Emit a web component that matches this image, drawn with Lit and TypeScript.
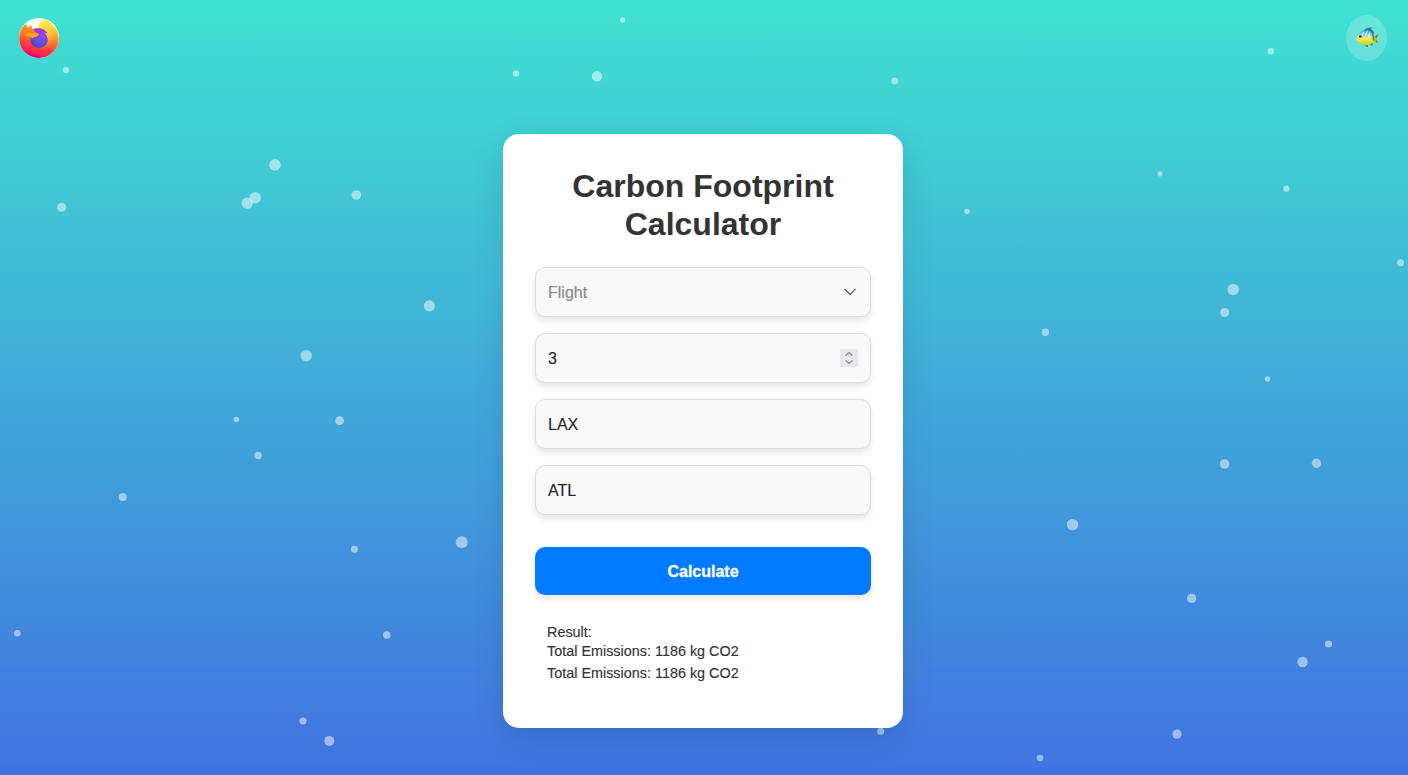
import { LitElement, html, css, svg } from "lit";
import { customElement, state } from "lit/decorators.js";

// [centre x, centre y, diameter]
const BUBBLES: [number, number, number][] = [
  [66, 70, 6.4], [61.7, 207.2, 9], [275, 164.8, 11.6], [255.2, 197.7, 11.6], [247.2, 203.2, 11.2],
  [356.3, 195, 9.6], [429.4, 305.8, 11.2], [306.2, 355.8, 11.4], [236.4, 419.4, 5.4],
  [339.6, 420.6, 8.8], [258.1, 455.4, 7.4], [122.8, 497, 8], [354.4, 549.3, 7], [461.7, 542.2, 12],
  [17.3, 633.3, 6.6], [386.8, 635, 7.6], [303, 721, 7], [329.3, 740.9, 10],
  [622.6, 20, 5.4], [516, 73.5, 6.4], [597, 76.2, 10.4], [894.8, 81, 6.8],
  [1270.8, 51.3, 6.6], [1160, 173.8, 5.2], [1286.4, 188.7, 6.2], [967, 211.5, 5.6],
  [1400.5, 262.7, 7], [1233.2, 289.5, 11.4], [1224.7, 312.5, 9], [1045.3, 332.3, 7.4],
  [1267.5, 379, 5.6], [1224.6, 464, 9.6], [1316.5, 463.2, 9.4], [1072.5, 524.6, 11.4],
  [1191.6, 598.4, 9.4], [1328.5, 644, 7.2], [1302.6, 662, 10.4], [1177, 734.2, 9.2],
  [1040, 758, 6.6], [880.7, 731.3, 7],
];

const firefox = svg`
  <defs>
    <linearGradient id="body" x1=".75" y1=".05" x2=".42" y2="1">
      <stop offset="0" stop-color="#fff04c"/><stop offset=".25" stop-color="#ffb52f"/>
      <stop offset=".48" stop-color="#ff7a2c"/><stop offset=".72" stop-color="#ff4040"/>
      <stop offset=".88" stop-color="#fb2050"/><stop offset="1" stop-color="#cf0070"/>
    </linearGradient>
    <linearGradient id="flame" x1=".3" y1="0" x2=".6" y2="1">
      <stop offset="0" stop-color="#fff14f"/><stop offset=".5" stop-color="#ffc83a"/>
      <stop offset="1" stop-color="#ff8a2b" stop-opacity="0"/>
    </linearGradient>
    <radialGradient id="globe" cx=".65" cy=".35" r=".7">
      <stop offset="0" stop-color="#8a4df5"/><stop offset=".5" stop-color="#6f4fe2"/>
      <stop offset="1" stop-color="#4a41b4"/>
    </radialGradient>
    <linearGradient id="head" x1=".3" y1="0" x2=".3" y2="1">
      <stop offset="0" stop-color="#ff9a12"/><stop offset=".5" stop-color="#ff7a22"/>
      <stop offset="1" stop-color="#ff4a3c" stop-opacity="0"/>
    </linearGradient>
  </defs>
  <circle cx="20" cy="20" r="20" fill="#fff"/>
  <path d="M3.200 9.800C4.400 8.300 5.800 7.200 7.400 6l.9 4.300 4-3.100.6 4.100c2.200-1 4.700-1.100 6.900-.5C19.600 7.600 21 3.500 24.200 1.300 30.500 3 39.800 9.300 39.800 20.800c0 10.800-8.900 19.100-19.800 19.100S.2 31.500.2 20.600c0-4 1-7.900 3-10.800z" fill="url(#body)"/>
  <path d="M24.200 1.300C20.800 4 19.600 7.500 20 10.800c5.400 1 8.300 5 8.300 10 0 6-4.300 9.300-8 9.600 9.500 1.700 16-4.600 16-13.200 0-7.500-5.300-14.300-12.100-15.900z" fill="url(#flame)"/>
  <circle cx="20" cy="20.700" r="9.200" fill="url(#globe)"/>
  <path d="M13.500 11.600c4-2.400 12.600-2 14.800 4l-3-.8c1.500 1.200 2.700 3 2.700 5-1-2.700-4.500-4.200-9.500-4.700z" fill="#a137de"/>
  <path d="M25 14.500c1.700.2 3 1.200 3.800 2.400.9 2.200 1 4.300.3 6.600-.2-3.800-1.500-6.800-4.100-9z" fill="#ffc13a"/>
  <path d="M7.400 6l.9 4.300 4-3.100.6 4.300c1.600.4 3 1.500 3.900 3.100 1.800.2 3.200.8 3.100 1.900-.2 1.700-3.800 2.100-5.900 3.300-1.800 1-2 3.600-1.500 5.200L4 25 3.200 9.800C4.400 8.300 5.800 7.200 7.400 6z" fill="url(#head)"/>
  <path d="M5.800 16.300c3.200-.9 7.500-1.500 12.800-.6.700.3 1.400.5 1.300 1-.3 1.600-4.700 1.800-6.300 3.600-1.800-1.800-5.700-1.400-7.800-4z" fill="#ffa81b"/>`;

const fish = svg`
  <defs>
    <linearGradient id="scales" x1=".42" y1="0" x2=".45" y2="1">
      <stop offset="0" stop-color="#1a98d4"/><stop offset=".35" stop-color="#7fd4e4"/>
      <stop offset=".55" stop-color="#f0ee50"/><stop offset="1" stop-color="#d2cd1e"/>
    </linearGradient>
  </defs>
  <path d="M9 3.400C10.500 1.200 13.500.2 18 .6c-1.500.3-2.400.8-2.500 1.500 2 1 3.300 2.700 3.800 4.600z" fill="#2a6f8c"/>
  <path d="M9.500 17.500c.5 1.200 1.800 2.200 3.600 2.600l-.6-2.400zM14 16.500l3.300 2.200.2-3z" fill="#656321"/>
  <path d="M18 10.200c2 .2 3.300-1.700 4.800-3.200.3 2-1 3.500-1 4.800 0 1.600 1.300 3 1.100 4.500-1.800-.8-3-2.800-5-2.900z" fill="#c3b41a"/>
  <path d="M20 9.900l2.800-2.900-.9 3.600zM20.500 14l2.400 2.300-1-3z" fill="#6d6a22"/>
  <path d="M.5 12.200C3 8.500 6 3 11.500 2.800c4 .2 7.500 3.600 7.500 8.400 0 4-2.700 7-7.500 7C7.500 18.200 5 15.400 2 14z" fill="url(#scales)"/>
  <path d="M16 4c2.300 1.700 3.500 4.500 2.900 8.500l-.9 2c-.6-3.200.2-6.800-2-10.500z" fill="#3f675b"/>
  <path d="M9 4.800C7.900 6 7.500 7.300 7.600 8.600M12.300 4c-1.200 1.900-1.600 3.500-1.200 5.600M15 5.600c-1.300 1.800-1.400 3.200-.9 4.800" fill="none" stroke="#e4f8fa" stroke-width="1.200"/>
  <circle cx="5.300" cy="9.500" r="1.900" fill="#f0ee9c"/>
  <circle cx="5.300" cy="9.500" r="1.250" fill="#1c1d16"/>`;

@customElement("app-root")
export class AppRoot extends LitElement {
  static styles = css`
    :host {
      display: block;
      font-family: "Liberation Sans", Arial, sans-serif;
    }
    .page {
      position: relative;
      box-sizing: border-box;
      width: 100%;
      height: 775px;
      overflow: hidden;
      background: linear-gradient(#40e2d1, #4169e1 840px);
      display: flex;
      flex-direction: column;
    }
    .bubbles {
      position: absolute;
      inset: 0;
      width: 100%;
      height: 100%;
      fill: rgba(255, 255, 255, 0.5);
    }
    .top {
      display: flex;
      justify-content: space-between;
      align-items: center;
      height: 46px;
      padding: 15px 21px 0 19.300px;
      position: relative;
    }
    .logo { width: 40px; height: 40px; display: block; }
    .fish {
      width: 41px;
      height: 46px;
      border: 0;
      padding: 0 0 2px;
      border-radius: 50%;
      background: rgba(255, 255, 255, 0.2);
      display: flex;
      align-items: center;
      justify-content: center;
    }
    .fish svg { width: 23px; height: 21px; display: block; }
    .card {
      position: relative;
      box-sizing: border-box;
      width: 400px;
      height: 594px;
      margin: 73px auto 0;
      left: -1px;
      padding: 33px 32px 32px;
      border-radius: 16px;
      background: #fff;
      box-shadow: 0 8px 32px rgba(0, 0, 0, 0.1);
      display: flex;
      flex-direction: column;
    }
    h1 {
      margin: 0 0 23px;
      font-size: 32px;
      line-height: 38.400px;
      font-weight: 700;
      text-align: center;
      color: #333;
    }
    .fields { display: flex; flex-direction: column; gap: 16px; }
    .field {
      box-sizing: border-box;
      height: 50px;
      padding: 0 12px;
      display: flex;
      align-items: center;
      justify-content: space-between;
      border: 1px solid #ddd;
      border-radius: 10px;
      background: #f9f9f9;
      box-shadow: 0 4px 6px rgba(0, 0, 0, 0.1);
      font-size: 16px;
      color: #212529;
      -webkit-text-stroke: 0.15px currentColor;
    }
    .field span { padding-top: 2px; }
    .muted { color: #888; }
    .chevron { width: 16px; height: 16px; }
    .spin { width: 18px; height: 18px; background: #e9e9ed; }
    .calc {
      height: 48px;
      margin-top: 32px;
      padding: 2px 0 0;
      border: 0;
      border-radius: 10px;
      background: #007bff;
      box-shadow: 0 4px 6px rgba(0, 0, 0, 0.1);
      color: #fff;
      font: 700 16px "Liberation Sans", Arial, sans-serif;
      -webkit-text-stroke: 0.3px #fff;
    }
    .result {
      padding: 28px 12px 0;
      font-size: 14.400px;
      line-height: 19px;
      color: #333;
      -webkit-text-stroke: 0.15px currentColor;
    }
    .result p { margin: 0; }
    .result .total { margin-top: 3px; }
  `;

  @state() private mode = "Flight";
  @state() private passengers = 3;
  @state() private origin = "LAX";
  @state() private destination = "ATL";
  @state() private emissions = 1186;

  render() {
    return html`
      <div class="page">
        <svg class="bubbles">
          ${BUBBLES.map(([x, y, d]) => svg`<circle cx=${x} cy=${y} r=${d / 2}></circle>`)}
        </svg>
        <header class="top">
          <svg class="logo" viewBox="0 0 40 40">${firefox}</svg>
          <button class="fish" aria-label="Fish"><svg viewBox="0 0 23 21">${fish}</svg></button>
        </header>
        <main class="card">
          <h1>Carbon Footprint Calculator</h1>
          <div class="fields">
            <div class="field">
              <span class="muted">${this.mode}</span>
              <svg class="chevron" viewBox="0 0 16 16" fill="none" stroke="#66707c" stroke-width="1.600" stroke-linecap="round" stroke-linejoin="round"><path d="M3 5.500l5 5 5-5"/></svg>
            </div>
            <div class="field">
              <span>${this.passengers}</span>
              <svg class="spin" viewBox="0 0 18 18" fill="none" stroke="#8f8f9d" stroke-width="1.300" stroke-linecap="round" stroke-linejoin="round"><path d="M6 6.300l3-2.800 3 2.800M6 11.700l3 2.800 3-2.800"/></svg>
            </div>
            <div class="field"><span>${this.origin}</span></div>
            <div class="field"><span>${this.destination}</span></div>
          </div>
          <button class="calc">Calculate</button>
          <div class="result">
            <p>Result:</p>
            <p>Total Emissions: ${this.emissions} kg CO2</p>
            <p class="total">Total Emissions: ${this.emissions} kg CO2</p>
          </div>
        </main>
      </div>
    `;
  }
}
